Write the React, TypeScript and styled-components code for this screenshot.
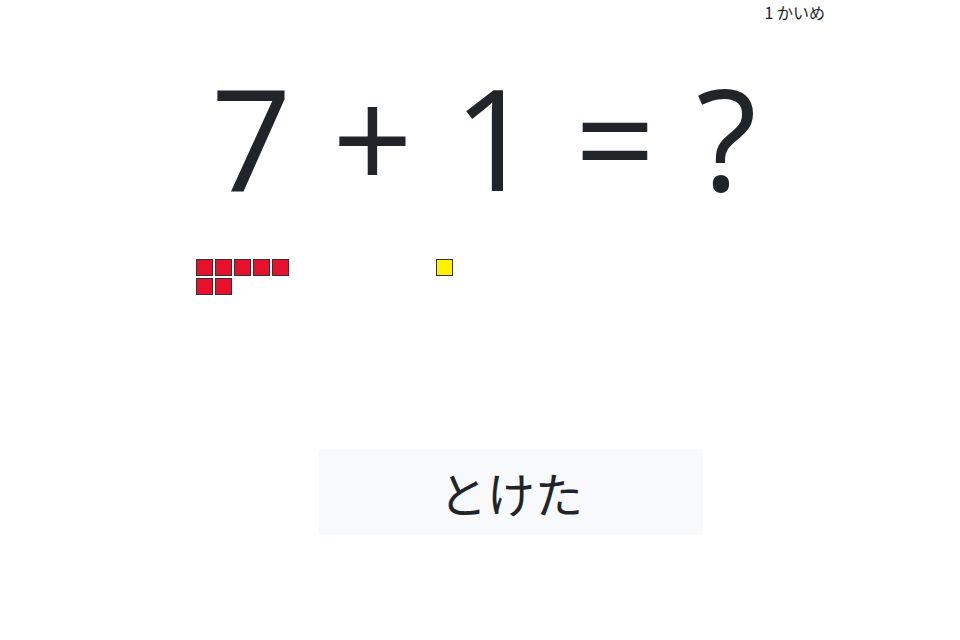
import React from "react";
import styled, { createGlobalStyle } from "styled-components";

const Global = createGlobalStyle`
  html, body { margin: 0; padding: 0; background: #fff; }
  body {
    font-family: "Noto Sans CJK JP", "Noto Sans", sans-serif;
    color: #212529;
    font-size: 16px;
    line-height: 1.5;
  }
`;

const Page = styled.div`
  max-width: 720px;
  margin: 0 auto;
  padding: 0 15px;
  box-sizing: border-box;
`;

const Header = styled.div`
  text-align: right;
  font-size: 16px;
  line-height: 24px;
`;

const Equation = styled.div`
  margin-top: 29px;
  text-align: center;
  font-family: "Open Sans", "Noto Sans CJK JP", sans-serif;
  font-size: 141px;
  line-height: 166px;
  word-spacing: 4px;
  white-space: pre;
  padding-left: 8px;
`;

const BlockRow = styled.div`
  display: flex;
  margin-top: 39px;
  padding-left: 60px;
`;

const Group = styled.div`
  width: 240px;
  display: flex;
  flex-direction: column;
`;

const GroupInner = styled.div`
  width: 95px;
  display: flex;
  flex-wrap: wrap;
`;

const Block = styled.div<{ $color: string }>`
  width: 15px;
  height: 15px;
  margin: 1px;
  border: 1px solid #333;
  background: ${(p) => p.$color};
`;

const ButtonWrap = styled.div`
  margin-top: 153px;
  padding-left: 184px;
`;

const SolveButton = styled.button`
  width: 384px;
  height: 86px;
  border: none;
  border-radius: 4px;
  background: #f8f9fa;
  color: #212529;
  font-family: "Noto Sans CJK JP", "Noto Sans", sans-serif;
  font-size: 48px;
  line-height: 1.5;
  padding: 0;
  cursor: pointer;
`;

const groups = [
  { count: 7, color: "#e8112d" },
  { count: 1, color: "#fff200" },
];

export default function App() {
  return (
    <>
      <Global />
      <Page>
        <Header>1 かいめ</Header>
        <Equation>7 + 1 = ?</Equation>
        <BlockRow>
          {groups.map((g, i) => (
            <Group key={i}>
              <GroupInner>
                {Array.from({ length: g.count }).map((_, j) => (
                  <Block key={j} $color={g.color} />
                ))}
              </GroupInner>
            </Group>
          ))}
        </BlockRow>
        <ButtonWrap>
          <SolveButton>とけた</SolveButton>
        </ButtonWrap>
      </Page>
    </>
  );
}
